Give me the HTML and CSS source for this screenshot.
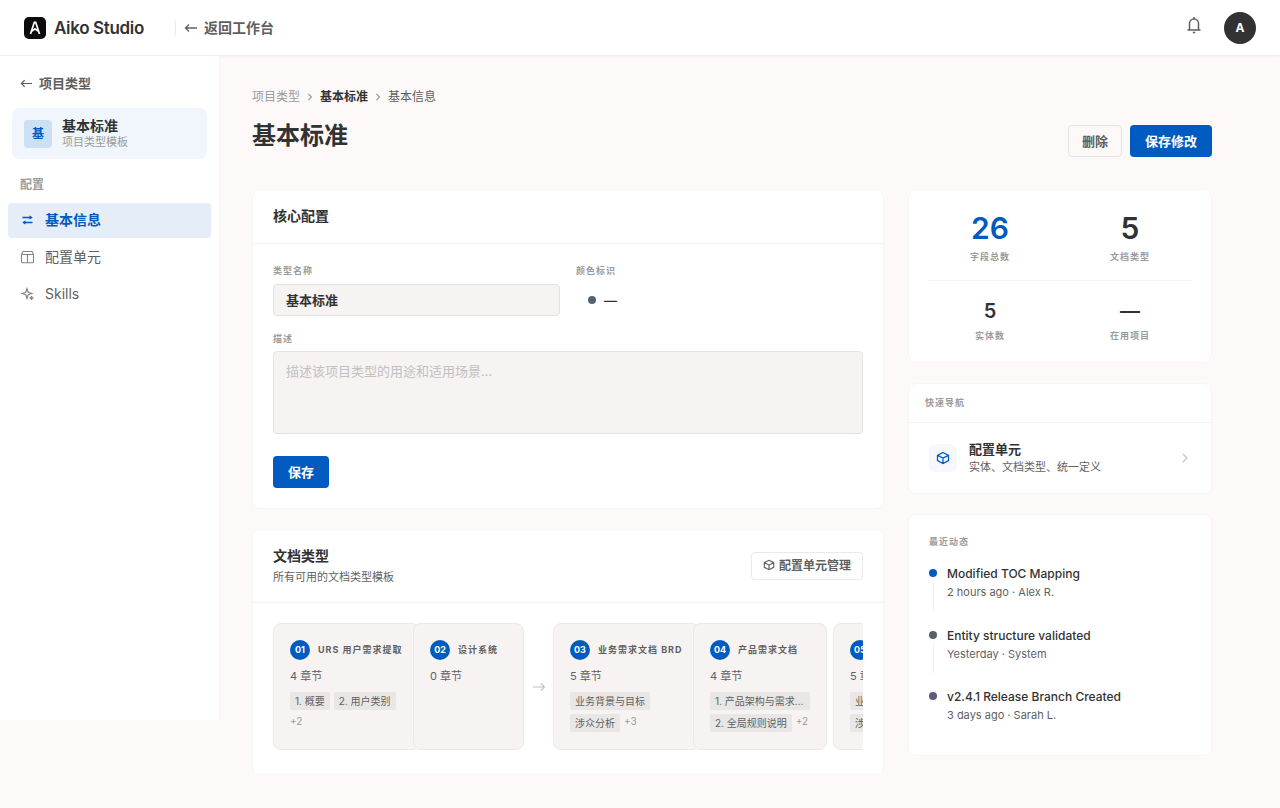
FILE: index.html
```html
<!DOCTYPE html>
<html lang="zh-CN">
<head>
    <meta charset="UTF-8">
    <meta name="viewport" content="width=device-width, initial-scale=1.0">
    <title>基本标准 - Aiko Studio</title>
    <link rel="stylesheet" href="styles.css">
</head>
<body>

    <header class="topbar">
        <svg class="logo" viewBox="0 0 22 22" width="22" height="22" aria-hidden="true">
            <rect width="22" height="22" rx="5" fill="#0c0c0c"/>
            <path d="M6.500 17 10.300 5.300h1.400L15.500 17M8 14.200l3-2.400 3 2.400" fill="none" stroke="#fff" stroke-width="1.700"/>
        </svg>
        <span class="brand">Aiko Studio</span>
        <a class="back-link" href="#">
            <svg viewBox="0 0 14 14" width="14" height="14" class="icon"><path d="M13 7H1.500M5 3.500 1.500 7 5 10.500" stroke-width="1.300"/></svg>
            返回工作台
        </a>
        <button class="bell" type="button" aria-label="通知">
            <svg viewBox="0 0 20 20" width="20" height="20" class="icon"><path d="M5.500 15V8.500a4.500 4.500 0 0 1 9 0V15M3.500 15h13M10 4V2M8.800 17.600h2.400" stroke-width="1.500"/></svg>
        </button>
        <button class="avatar" type="button">A</button>
    </header>

    <div class="layout">
        <aside class="sidebar">
            <a class="sidebar-back" href="#">
                <svg viewBox="0 0 14 14" width="13" height="13" class="icon"><path d="M13 7H1.500M5 3.500 1.500 7 5 10.500" stroke-width="1.300"/></svg>
                项目类型
            </a>
            <div class="project">
                <span class="project-icon">基</span>
                <div>
                    <div class="project-name">基本标准</div>
                    <div class="project-sub">项目类型模板</div>
                </div>
            </div>
            <div class="nav-label">配置</div>
            <nav class="nav">
                <a class="nav-item active" href="#">
                    <svg viewBox="0 0 15 15" width="15" height="15" class="icon"><path d="M2.500 5.500h9M3.500 10.500h9" stroke-width="1.300"/><path d="M9.500 3.500 12.800 5.500l-3.300 2zM5.500 8.500 2.200 10.500l3.300 2z" fill="currentColor" stroke="none"/></svg>
                    基本信息
                </a>
                <a class="nav-item" href="#">
                    <svg viewBox="0 0 15 15" width="15" height="15" class="icon"><path d="M1.500 5.500 3 2.500h9l1.500 3v7a1.300 1.300 0 0 1-1.300 1.300H2.800a1.300 1.300 0 0 1-1.300-1.300zM1.500 5.500h12M7.500 5.500v8.300"/></svg>
                    配置单元
                </a>
                <a class="nav-item" href="#">
                    <svg viewBox="0 0 15 15" width="15" height="15" class="icon"><path d="M7 2.700 8.200 6.300 11.800 7.500 8.200 8.700 7 12.300 5.800 8.700 2.200 7.500 5.800 6.300z" stroke-width="1.200"/><path d="M11.500 10v4M9.500 12h4" stroke-width="1.600"/></svg>
                    Skills
                </a>
            </nav>
        </aside>

        <main class="content">
            <div class="page-head">
                <div>
                    <nav class="breadcrumb">
                        <a href="#">项目类型</a>
                        <svg viewBox="0 0 8 8" width="8" height="8" class="icon"><path d="M2.500 1l3 3-3 3"/></svg>
                        <a class="crumb-strong" href="#">基本标准</a>
                        <svg viewBox="0 0 8 8" width="8" height="8" class="icon"><path d="M2.500 1l3 3-3 3"/></svg>
                        <span class="crumb-current">基本信息</span>
                    </nav>
                    <h1>基本标准</h1>
                </div>
                <div class="page-actions">
                    <button class="btn btn-outline" type="button">删除</button>
                    <button class="btn btn-primary" type="button">保存修改</button>
                </div>
            </div>

            <div class="columns">
                <div class="column">
                    <section class="card">
                        <div class="card-head">
                            <h2>核心配置</h2>
                        </div>
                        <form class="card-body">
                            <div class="form-row">
                                <div>
                                    <label class="label" for="type-name">类型名称</label>
                                    <input class="field" id="type-name" type="text" value="基本标准">
                                </div>
                                <div>
                                    <div class="label">颜色标识</div>
                                    <div class="color-value"><span class="color-dot"></span>—</div>
                                </div>
                            </div>
                            <label class="label" for="description">描述</label>
                            <textarea class="field field-area" id="description" placeholder="描述该项目类型的用途和适用场景…"></textarea>
                            <button class="btn btn-primary" type="button">保存</button>
                        </form>
                    </section>

                    <section class="card">
                        <div class="card-head card-head-tall">
                            <div>
                                <h2>文档类型</h2>
                                <p>所有可用的文档类型模板</p>
                            </div>
                            <button class="btn btn-small" type="button">
                                <svg viewBox="0 0 14 14" width="12" height="12" class="icon"><path d="M7 1.500 12.500 4.300v5.400L7 12.500 1.500 9.700V4.300zM1.500 4.300 7 7l5.500-2.700M7 7v5.500" stroke-width="1.300"/></svg>
                                配置单元管理
                            </button>
                        </div>
                        <div class="card-body card-body-steps">
                            <div class="steps">
                                <div class="step">
                                    <div class="doc">
                                        <div class="doc-title"><span class="doc-no">01</span>URS 用户需求提取</div>
                                        <div class="doc-count">4 章节</div>
                                        <div class="chips"><span class="chip">1. 概要</span><span class="chip">2. 用户类别</span><span class="more">+2</span></div>
                                    </div>
                                </div>
                                <div class="step">
                                    <div class="doc">
                                        <div class="doc-title"><span class="doc-no">02</span>设计系统</div>
                                        <div class="doc-count">0 章节</div>
                                    </div>
                                    <svg viewBox="0 0 14 14" width="14" height="14" class="icon step-arrow"><path d="M1 7h11.500M9 3.500 12.500 7 9 10.500"/></svg>
                                </div>
                                <div class="step">
                                    <div class="doc">
                                        <div class="doc-title"><span class="doc-no">03</span>业务需求文档 BRD</div>
                                        <div class="doc-count">5 章节</div>
                                        <div class="chips"><span class="chip">业务背景与目标</span><span class="chip">涉众分析</span><span class="more">+3</span></div>
                                    </div>
                                </div>
                                <div class="step">
                                    <div class="doc">
                                        <div class="doc-title"><span class="doc-no">04</span>产品需求文档</div>
                                        <div class="doc-count">4 章节</div>
                                        <div class="chips"><span class="chip">1. 产品架构与需求概述</span><span class="chip">2. 全局规则说明</span><span class="more">+2</span></div>
                                    </div>
                                </div>
                                <div class="step">
                                    <div class="doc">
                                        <div class="doc-title"><span class="doc-no">05</span>系统需求文档</div>
                                        <div class="doc-count">5 章节</div>
                                        <div class="chips"><span class="chip">业务背景与目标</span><span class="chip">涉众分析</span><span class="more">+3</span></div>
                                    </div>
                                </div>
                            </div>
                        </div>
                    </section>
                </div>

                <div class="column">
                    <section class="card stats">
                        <div class="stat stat-big stat-blue"><strong>26</strong><span class="label">字段总数</span></div>
                        <div class="stat stat-big"><strong>5</strong><span class="label">文档类型</span></div>
                        <hr>
                        <div class="stat"><strong>5</strong><span class="label">实体数</span></div>
                        <div class="stat"><strong>—</strong><span class="label">在用项目</span></div>
                    </section>

                    <section class="card">
                        <h3 class="label quick-head">快速导航</h3>
                        <a class="quick-item" href="#">
                            <span class="quick-icon">
                                <svg viewBox="0 0 14 14" width="14" height="14" class="icon"><path d="M7 1.500 12.500 4.300v5.400L7 12.500 1.500 9.700V4.300zM1.500 4.300 7 7l5.500-2.700M7 7v5.500" stroke-width="1.300"/></svg>
                            </span>
                            <span class="quick-text">
                                <strong>配置单元</strong>
                                <small>实体、文档类型、统一定义</small>
                            </span>
                            <svg viewBox="0 0 12 12" width="12" height="12" class="icon quick-arrow"><path d="M4 2l4 4-4 4"/></svg>
                        </a>
                    </section>

                    <section class="card activity">
                        <h3 class="label">最近动态</h3>
                        <ul>
                            <li>
                                <span class="dot dot-blue"></span>
                                <strong>Modified TOC Mapping</strong>
                                <small>2 hours ago · Alex R.</small>
                            </li>
                            <li>
                                <span class="dot dot-slate"></span>
                                <strong>Entity structure validated</strong>
                                <small>Yesterday · System</small>
                            </li>
                            <li>
                                <span class="dot dot-purple"></span>
                                <strong>v2.4.1 Release Branch Created</strong>
                                <small>3 days ago · Sarah L.</small>
                            </li>
                        </ul>
                    </section>
                </div>
            </div>
        </main>
    </div>

</body>
</html>
```

FILE: styles.css
```css
* {
    box-sizing: border-box;
}

body {
    margin: 0;
    background-color: #fcf9f8;
    color: #323233;
    font-family: Inter, "Noto Sans CJK SC", sans-serif;
    font-size: 13px;
    line-height: 16px;
}

a {
    color: inherit;
    text-decoration: none;
}

button,
input,
textarea {
    font-family: inherit;
    color: inherit;
}

button {
    cursor: pointer;
}

h1,
h2,
h3,
p,
ul {
    margin: 0;
    padding: 0;
}

.icon {
    display: block;
    flex: none;
    fill: none;
    stroke: currentColor;
    stroke-width: 1.1;
}

/* Top bar */
.topbar {
    display: flex;
    align-items: center;
    height: 56px;
    padding: 0 24px;
    background-color: #fff;
    border-bottom: 1px solid #f3f1f2;
    box-shadow: 0 1px 3px rgba(0, 0, 0, 0.04);
}

.brand {
    margin-left: 8px;
    font-size: 17px;
    font-weight: 600;
    letter-spacing: -0.02em;
}

.back-link {
    display: flex;
    align-items: center;
    gap: 6px;
    margin-left: 31px;
    padding-left: 8px;
    border-left: 1px solid #ebe9e9;
    color: #5f5f5f;
    font-size: 14px;
    font-weight: 600;
}

.bell {
    margin-left: auto;
    margin-right: 20px;
    padding: 0 0 6px;
    border: 0;
    background: none;
    color: #5f5f5f;
}

.avatar {
    width: 32px;
    height: 32px;
    padding: 0;
    border: 0;
    border-radius: 50%;
    background-color: #323233;
    color: #fff;
    font-size: 12px;
    font-weight: 700;
}

/* Sidebar */
.layout {
    display: flex;
    align-items: flex-start;
}

.sidebar {
    flex: none;
    width: 220px;
    min-height: 664px;
    padding: 19px 8px;
    background-color: #fff;
    border-right: 1px solid #f6f4f4;
}

.sidebar-back {
    display: flex;
    align-items: center;
    gap: 6px;
    padding-left: 12px;
    color: #5f5f5f;
    font-weight: 600;
}

.project {
    display: flex;
    align-items: center;
    gap: 10px;
    margin: 17px 4px 18px;
    padding: 9px 12px;
    border-radius: 8px;
    background-color: #f0f6fb;
}

.project-icon {
    width: 28px;
    border-radius: 4px;
    background-color: #cddff4;
    color: #005bc1;
    font-size: 12px;
    font-weight: 700;
    line-height: 28px;
    text-align: center;
}

.project-name {
    font-size: 14px;
    font-weight: 600;
    line-height: 18px;
}

.project-sub {
    color: #9b9b9b;
    font-size: 11px;
    line-height: 15px;
}

.nav-label {
    padding-left: 12px;
    margin-bottom: 10px;
    color: #9b9b9b;
    font-size: 12px;
    font-weight: 600;
}

.nav {
    display: flex;
    flex-direction: column;
    gap: 2px;
}

.nav-item {
    display: flex;
    align-items: center;
    gap: 10px;
    height: 35px;
    padding: 0 12px 2px;
    border-radius: 4px;
    color: #5f5f5f;
    font-size: 14px;
}

.nav-item .icon {
    color: #858585;
}

.nav-item.active,
.nav-item.active .icon {
    color: #005bc1;
}

.nav-item.active {
    background-color: #e5edf8;
    font-weight: 600;
}

/* Page head */
.content {
    flex: 1;
    min-width: 0;
    max-width: 1024px;
    padding: 32px;
}

.page-head {
    display: flex;
    align-items: flex-end;
    justify-content: space-between;
    margin-bottom: 32px;
}

.breadcrumb {
    display: flex;
    align-items: center;
    gap: 6px;
    color: #9b9b9b;
    font-size: 12px;
    line-height: 18px;
}

.crumb-strong {
    color: #323233;
    font-weight: 600;
}

.crumb-current {
    color: #5f5f5f;
}

h1 {
    margin: 12px 0 3px;
    font-size: 24px;
    font-weight: 700;
    line-height: 36px;
}

.page-actions {
    display: flex;
    gap: 8px;
}

.btn {
    height: 32px;
    border: 0;
    border-radius: 4px;
    font-size: 13px;
    font-weight: 700;
}

.btn-primary {
    padding: 0 15px 2px;
    background-color: #005bc1;
    color: #fff;
}

.btn-outline {
    padding: 0 13px 2px;
    border: 1px solid #e5e2e1;
    background: none;
    color: #5f5f5f;
    font-weight: 600;
}

.btn-small {
    display: flex;
    align-items: center;
    gap: 4px;
    height: 28px;
    padding: 0 11px 2px;
    border: 1px solid #ebe9e9;
    background: none;
    color: #5f5f5f;
    font-size: 12px;
    font-weight: 600;
}

/* Cards */
.columns {
    display: grid;
    grid-template-columns: minmax(0, 1fr) 304px;
    align-items: start;
    gap: 24px;
}

.column {
    display: flex;
    flex-direction: column;
    gap: 20px;
}

.card {
    border: 1px solid #f8f6f5;
    border-radius: 8px;
    background-color: #fff;
}

.card-head {
    display: flex;
    align-items: center;
    justify-content: space-between;
    height: 54px;
    padding: 0 20px 1px;
    border-bottom: 1px solid #f5f3f3;
}

.card-head-tall {
    height: 73px;
}

h2 {
    font-size: 14px;
    font-weight: 600;
    line-height: 20px;
}

.card-head p {
    margin-top: 2px;
    color: #5f5f5f;
    font-size: 11px;
    line-height: 18px;
}

.card-body {
    padding: 20px;
}

.label {
    display: block;
    color: #9b9b9b;
    font-size: 9px;
    font-weight: 600;
    letter-spacing: 1px;
    line-height: 14px;
}

.form-row {
    display: grid;
    grid-template-columns: 1fr 1fr;
    gap: 16px;
    margin-bottom: 16px;
}

.field {
    display: block;
    width: 100%;
    height: 32px;
    margin-top: 6px;
    padding: 0 12px 2px;
    border: 1px solid #e5e2e1;
    border-radius: 4px;
    background-color: #f6f3f2;
    font-size: 13px;
    font-weight: 600;
}

.field-area {
    height: 83px;
    margin-top: 5px;
    margin-bottom: 22px;
    padding: 10px 12px;
    font-weight: 400;
    line-height: 18px;
    resize: none;
}

.field::placeholder {
    color: #c2c0c0;
}

.color-value {
    display: flex;
    align-items: center;
    gap: 8px;
    height: 32px;
    margin-top: 6px;
    padding-left: 12px;
    font-weight: 600;
}

.color-dot {
    width: 8px;
    height: 8px;
    border-radius: 50%;
    background-color: #55626c;
}

/* Document types */
.card-body-steps {
    padding-bottom: 24px;
}

.steps {
    display: flex;
    overflow: hidden;
}

.step {
    display: flex;
    flex: none;
    align-items: center;
    gap: 8px;
    width: 140px;
}

.doc {
    flex: none;
    align-self: stretch;
    width: min-content;
    min-width: 111px;
    min-height: 127px;
    padding: 16px;
    border: 1px solid #ebe8e7;
    border-radius: 8px;
    background-color: #f6f3f2;
    color: #5f5f5f;
}

.doc-title {
    display: flex;
    align-items: center;
    gap: 8px;
    font-size: 9px;
    font-weight: 700;
    letter-spacing: 1px;
    white-space: nowrap;
}

.doc-no {
    width: 20px;
    border-radius: 50%;
    background-color: #005bc1;
    color: #fff;
    letter-spacing: 0;
    line-height: 20px;
    text-align: center;
}

.doc-count {
    margin: 8px 0;
    font-size: 11px;
    white-space: nowrap;
}

.chips {
    display: flex;
    flex-wrap: wrap;
    gap: 4px;
}

.chip {
    max-width: 100px;
    padding: 0 5px;
    border-radius: 2px;
    background-color: #e9e7e6;
    font-size: 10px;
    line-height: 18px;
    overflow: hidden;
    text-overflow: ellipsis;
    white-space: nowrap;
}

.more {
    color: #9b9b9b;
    font-size: 10px;
    line-height: 14px;
}

.step-arrow {
    color: #c2c0c0;
}

/* Stats */
.stats {
    display: grid;
    grid-template-columns: 1fr 1fr;
    column-gap: 16px;
    padding: 19px;
    text-align: center;
}

.stats hr {
    grid-column: 1 / -1;
    width: 100%;
    margin: 16px 0;
    border: 0;
    border-top: 1px solid #f5f3f3;
}

.stat strong {
    display: block;
    margin-bottom: 4px;
    font-size: 20px;
    font-weight: 600;
    line-height: 28px;
}

.stat-big strong {
    margin-bottom: 2px;
    font-size: 30px;
    line-height: 39px;
}

.stat-blue strong {
    color: #005bc1;
}

/* Quick navigation */
.quick-head {
    padding: 12px 16px;
    border-bottom: 1px solid #f5f3f3;
}

.quick-item {
    display: flex;
    align-items: center;
    gap: 12px;
    padding: 17px 20px;
}

.quick-icon {
    padding: 7px;
    border-radius: 6px;
    background-color: #f7f8fe;
    color: #005bc1;
}

.quick-text {
    flex: 1;
}

.quick-text strong,
.quick-text small {
    display: block;
    line-height: 18px;
}

.quick-text strong {
    font-weight: 600;
}

.quick-text small {
    color: #5f5f5f;
    font-size: 11px;
}

.quick-arrow {
    color: #c2c0c0;
}

/* Activity */
.activity {
    padding: 20px;
}

.activity ul {
    margin-top: 15px;
    list-style: none;
}

.activity li {
    display: grid;
    grid-template-columns: 8px 1fr;
    column-gap: 10px;
    padding-bottom: 24px;
    position: relative;
}

.activity li:last-child {
    padding-bottom: 11px;
}

/* line between two entries */
.activity li:not(:last-child)::after {
    content: "";
    position: absolute;
    left: 4px;
    top: 16px;
    width: 1px;
    height: 32px;
    background-color: #f3f1f1;
}

.activity strong {
    font-size: 12px;
    font-weight: 500;
    line-height: 20px;
}

.activity small {
    grid-column: 2;
    color: #5f5f5f;
    font-size: 11px;
    line-height: 17px;
}

.activity li:first-child {
    padding-bottom: 25px;
}

.dot {
    width: 8px;
    height: 8px;
    margin-top: 5px;
    border-radius: 50%;
}

.dot-blue {
    background-color: #005bc1;
}

.dot-slate {
    background-color: #55626c;
}

.dot-purple {
    background-color: #605c78;
}
```
